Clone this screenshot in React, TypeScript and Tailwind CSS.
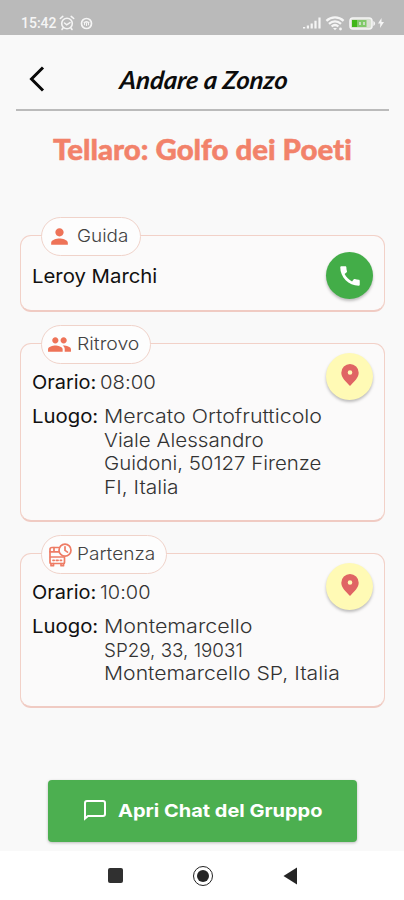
import type { ReactNode } from "react";
import { MdPerson, MdPeople, MdCall } from "react-icons/md";

function StatusBar() {
  return (
    <div className="flex h-[35px] shrink-0 items-end justify-between bg-[#bababa] pr-[20px] pb-[4px] pl-[21px] text-[#f5f5f5]">
      <div className="flex h-[16px] items-center">
        <span className="w-[36px] font-['Roboto',sans-serif] text-[14px] leading-[16px] font-medium whitespace-nowrap">15:42</span>
        <svg className="ml-[1.5px] h-[16px] w-[16px]" viewBox="0 0 16 16" fill="none" stroke="currentColor" strokeWidth="1.6" strokeLinecap="round">
          <circle cx="8" cy="8.5" r="5.3" />
          <path d="M1.3 3.5 3.8 1.4M14.7 3.5 12.2 1.4M5.5 8l2.2 1.8L11 7.6M4 13l-1 1.5M12 13l1 1.5" />
        </svg>
        <svg className="ml-[5px] h-[13px] w-[13px]" viewBox="0 0 13 13" fill="none" stroke="currentColor" strokeWidth="1.7">
          <circle cx="6.5" cy="6.5" r="5" />
          <path d="M3.5 5.3h6M4.5 8.2V6.5a2 2 0 0 1 4 0v1.7M6.5 6v3" strokeWidth="1.1" />
        </svg>
      </div>
      <div className="flex h-[16px] items-center">
        <svg className="h-[12px] w-[18px]" viewBox="0 0 18 12" fill="currentColor">
          <path d="M0 10h2.2v1.5H0zM3.8 8.6H6v2.9H3.8zM7.6 6.4h2.2v5.1H7.6zM11.4 3.700h2.200v7.800h-2.200zM15.400.5h2.200v11h-2.200z" />
        </svg>
        <svg className="ml-[4px] h-[15px] w-[20px]" viewBox="0 0 20 15" fill="none" stroke="currentColor" strokeWidth="2.300">
          <path d="M1.400 4.800c5-4.600 12.200-4.600 17.200 0M4 7.800c3.500-3.200 8.500-3.200 12 0M6.600 10.500c2-1.800 4.800-1.800 6.800 0" />
          <path d="m8 12 2 2.200 2-2.200z" fill="currentColor" strokeWidth="0" />
          <circle cx="15.500" cy="13" r="1.400" fill="currentColor" strokeWidth="0" />
        </svg>
        <svg className="ml-[4px] h-[13px] w-[27px]" viewBox="0 0 27 13">
          <rect x="1" y="1" width="22" height="11" rx="3" fill="#d9dfd3" stroke="#f5f5f5" strokeWidth="1.600" />
          <path d="M3 3h5v7H3z" fill="#3fb618" />
          <path d="M8 3h9.500v7H8z" fill="#80c969" />
          <path d="M10 5h2v3h-2zM14 5h2v3h-2z" fill="#c8dfc0" />
          <path d="M24.300 4c2.400 1 2.400 4 0 5z" fill="#f5f5f5" />
        </svg>
        <svg className="ml-[2px] h-[10px] w-[6px]" viewBox="0 0 6 10" fill="currentColor">
          <path d="M3.500 0 0 5.600h2.300L2 10l4-6H3.500z" />
        </svg>
      </div>
    </div>
  );
}

function BusClockIcon() {
  return (
    <svg className="h-[24px] w-[24px]" viewBox="0 0 24 24" fill="none" stroke="#ee7c65" strokeWidth="1.700" strokeLinecap="round" strokeLinejoin="round">
      <path d="M10.500 4.500H4c-1.200 0-2 .7-2 1.800v13.200c0 .6.400 1 1 1h12.500c.6 0 1-.4 1-1V14.500" />
      <path d="M2 8.800h8.500M2.500 14h13.500M5 17.300h1.200M12.300 17.300h1.200M8.300 17.300h1.800M3 20.500v2.200h2.500v-2.200M13 20.500v2.200h2.500v-2.200M6 4.500v4" />
      <circle cx="17" cy="7.200" r="6" />
      <path d="M17 3.800v3.600l2.500 1.700" />
    </svg>
  );
}

function Card({ className, chip, chipClass, children, action }: { className: string; chip: ReactNode; chipClass: string; children: ReactNode; action: ReactNode }) {
  return (
    <section className={`relative flex justify-between rounded-[11px] border border-b-2 border-[#f2d1c8] border-b-[#f0cbc3] bg-[#fbfafa] px-[11px] ${className}`}>
      <div className={`absolute -top-[19px] left-[20px] flex h-[39px] items-center rounded-full border border-[#f0d3ca] bg-[#fdfdfd] text-[17.500px] font-light text-[#424242] ${chipClass}`}>
        {chip}
      </div>
      <div className="flex-1">{children}</div>
      {action}
    </section>
  );
}

function Pin() {
  return (
    <button className="mt-[8.500px] flex h-[47px] w-[47px] shrink-0 items-center justify-center rounded-full bg-[#fffab5] shadow-[0_2px_3px_rgba(0,0,0,0.25)]">
      <svg className="-mt-[2px] h-[22px] w-[18px]" viewBox="0 0 18 22" fill="#e06464" fillRule="evenodd">
        <path d="M9 0a8.700 8.700 0 0 0-8.700 8.700C.3 13.500 4.500 17.200 9 22c4.500-4.800 8.700-8.500 8.700-13.300A8.700 8.700 0 0 0 9 0zm0 6.200a2.300 2.300 0 1 1 0 4.600 2.300 2.300 0 0 1 0-4.600z" />
      </svg>
    </button>
  );
}

function Details({ time, timeClass, lines }: { time: string; timeClass: string; lines: { text: string; cls: string }[] }) {
  return (
    <div className="text-[19px] leading-[23.8px] whitespace-nowrap text-[#333]">
      <div className="flex pt-[26.500px]">
        <span className="w-[68px]">
          <span className="inline-block origin-left scale-x-[1.05] text-[#111]">Orario:</span>
        </span>
        <span className={`inline-block origin-left font-light ${timeClass}`}>{time}</span>
      </div>
      <div className="flex pt-[10.500px]">
        <span className="w-[72px]">
          <span className="inline-block origin-left scale-x-[1.07] text-[#111]">Luogo:</span>
        </span>
        <div className="flex w-0 flex-col items-start font-light">
          {lines.map((l) => (
            <span key={l.text} className={`origin-left ${l.cls}`}>{l.text}</span>
          ))}
        </div>
      </div>
    </div>
  );
}

export default function App() {
  return (
    <div className="flex h-[900px] w-[404px] flex-col overflow-hidden bg-[#f9f9f9] font-['Inter','Liberation_Sans',sans-serif] [font-variant-ligatures:none]">
      <StatusBar />
      <header className="mr-[15px] ml-[16px] flex h-[76px] shrink-0 items-center border-b-2 border-[#bbb] pt-[13px]">
        <svg className="ml-[13px] h-[26px] w-[16px]" viewBox="0 0 16 26" fill="none" stroke="#080808" strokeWidth="3">
          <path d="M14 1.500 2.500 13 14 24.500" />
        </svg>
        <h1 className="mt-[2px] ml-[75px] origin-left scale-x-[1.02] -skew-x-6 font-['Lato',sans-serif] text-[25px] font-bold whitespace-nowrap text-[#0c0c0c] italic">Andare a Zonzo</h1>
      </header>
      <main className="flex flex-1 flex-col pr-[19px] pl-[20px]">
        <h2 className="mt-[18px] ml-[33px] h-[40px] w-max origin-left scale-x-[1.015] font-['Lato',sans-serif] text-[29px] leading-[40px] font-black whitespace-nowrap text-[#f2826a] [-webkit-text-stroke:0.5px_#f2826a]">Tellaro: Golfo dei Poeti</h2>
        <Card
          className="mt-[66px] h-[77px]"
          chipClass="w-[100px]"
          chip={<><MdPerson className="ml-[5px] size-[25px] text-[#ee7358]" /><span className="ml-[5px] origin-left scale-x-[1.08]">Guida</span></>}
          action={
            <button className="mt-[16px] flex h-[47px] w-[47px] shrink-0 items-center justify-center rounded-full bg-[#43ad48] shadow-[0_2px_3px_rgba(0,0,0,0.25)]">
              <MdCall className="size-[26px] text-white" />
            </button>
          }
        >
          <div className="w-max origin-left scale-x-[1.07] pt-[28.500px] text-[19px] leading-[24px] text-[#111]">Leroy Marchi</div>
        </Card>
        <Card
          className="mt-[31px] h-[179px]"
          chipClass="w-[110px]"
          chip={<><MdPeople className="ml-[5px] size-[25px] text-[#ee7358]" /><span className="ml-[5px] origin-left scale-x-[1.11]">Ritrovo</span></>}
          action={<Pin />}
        >
          <Details
            time="08:00"
            timeClass="scale-x-[1.07]"
            lines={[
              { text: "Mercato Ortofrutticolo", cls: "scale-x-[1.125]" },
              { text: "Viale Alessandro", cls: "scale-x-[1.085]" },
              { text: "Guidoni, 50127 Firenze", cls: "scale-x-[1.075]" },
              { text: "FI, Italia", cls: "scale-x-[1.1]" },
            ]}
          />
        </Card>
        <Card
          className="mt-[31px] h-[155px]"
          chipClass="w-[126px]"
          chip={<><span className="ml-[6px]"><BusClockIcon /></span><span className="ml-[5px] origin-left scale-x-[1.09]">Partenza</span></>}
          action={<Pin />}
        >
          <Details
            time="10:00"
            timeClass="scale-x-[1.05]"
            lines={[
              { text: "Montemarcello", cls: "scale-x-[1.13]" },
              { text: "SP29, 33, 19031", cls: "scale-x-[0.99]" },
              { text: "Montemarcello SP, Italia", cls: "scale-x-[1.115]" },
            ]}
          />
        </Card>
        <button className="mx-[28px] mt-[72px] flex h-[62px] items-center rounded-[4px] bg-[#4caf50] pb-[2px] text-white shadow-[0_1px_3px_rgba(0,0,0,0.25)]">
          <svg className="ml-[36px] h-[21px] w-[22px]" viewBox="0 0 22 21" fill="none" stroke="currentColor" strokeWidth="2">
            <path d="M1 18.500V3c0-1.200.8-2 2-2h16c1.200 0 2 .8 2 2v11c0 1.200-.8 2-2 2H4z" />
          </svg>
          <span className="ml-[12px] origin-left scale-x-[1.11] text-[18px] font-bold whitespace-nowrap">Apri Chat del Gruppo</span>
        </button>
      </main>
      <nav className="flex h-[49px] shrink-0 items-center bg-white pl-[107.500px]">
        <div className="h-[15px] w-[15px] rounded-[2px] bg-[#303030]" />
        <div className="ml-[70px] flex h-[20px] w-[20px] items-center justify-center rounded-full border-[1.500px] border-[#222]">
          <div className="h-[12px] w-[12px] rounded-full bg-[#252525]" />
        </div>
        <svg className="ml-[70px] h-[18px] w-[14px]" viewBox="0 0 14 18" fill="#252525">
          <path d="M14 .5v17L.5 9z" />
        </svg>
      </nav>
    </div>
  );
}
